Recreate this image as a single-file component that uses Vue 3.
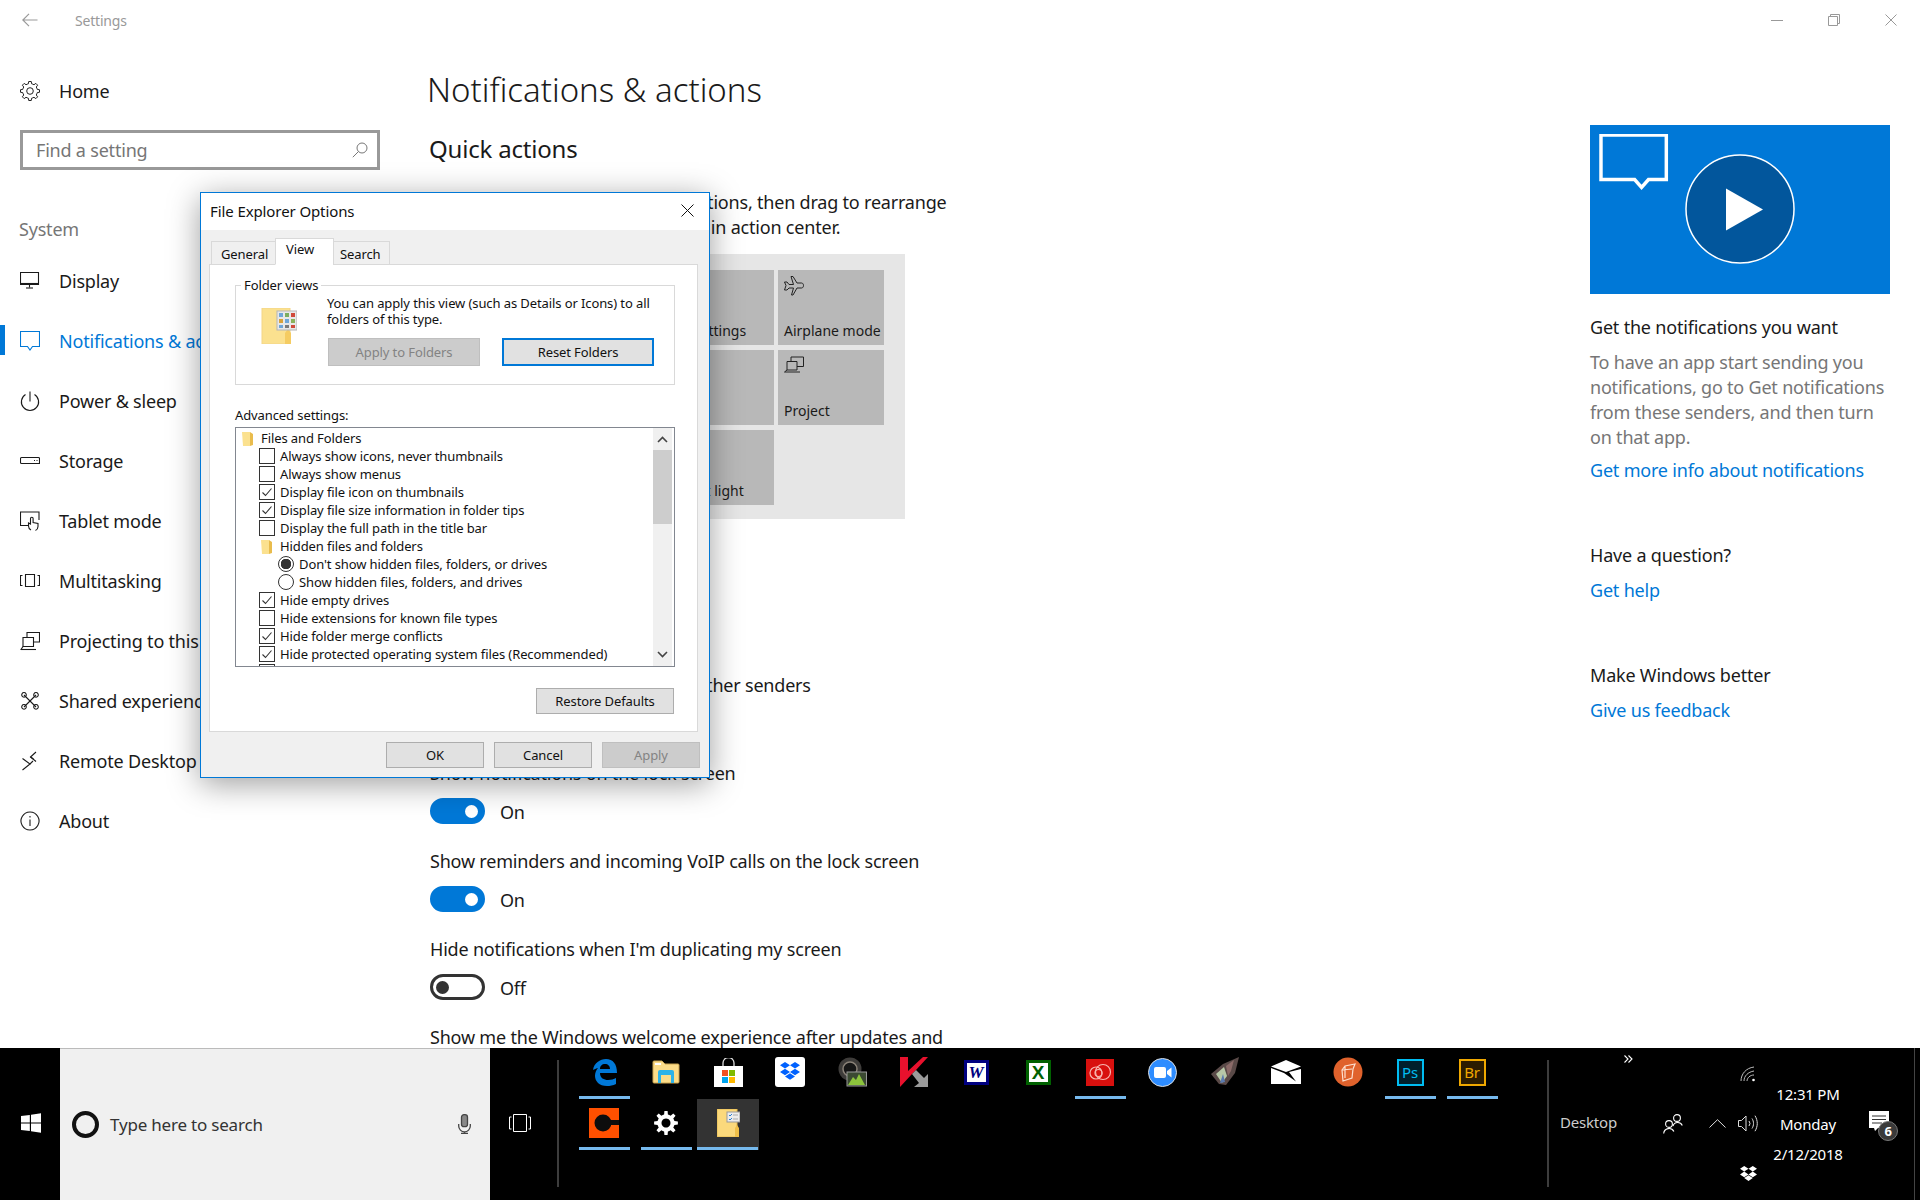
<script setup>
// gear outline used by the Home entry and the taskbar settings icon
const gearPath = (c, outer, inner, teeth) => {
  let d = "";
  const step = (Math.PI * 2) / teeth;
  for (let i = 0; i < teeth; i++) {
    const a = i * step;
    const pts = [
      [inner, a - step * 0.5],
      [inner, a - step * 0.28],
      [outer, a - step * 0.17],
      [outer, a + step * 0.17],
      [inner, a + step * 0.28],
    ];
    pts.forEach(([r, t], j) => {
      const x = (c + r * Math.cos(t)).toFixed(2);
      const y = (c + r * Math.sin(t)).toFixed(2);
      d += (i === 0 && j === 0 ? "M" : "L") + x + " " + y + " ";
    });
  }
  return d + "Z";
};

const homeGear = gearPath(10, 9.6, 7.4, 8);
const taskGear = gearPath(12, 12, 8.6, 8);

const navItems = [
  { label: "Display", paths: ["M.5 1.5h18v12H.5z", "M.5 12.5h18", "M9.5 13.5v3", "M6 17h7"] },
  { label: "Notifications & actions", active: true, paths: ["M.5 .5h19v15h-7l-2.5 3.5-2.5-3.5h-7z"] },
  { label: "Power & sleep", paths: ["M5.5 3.5a8.6 8.6 0 1 0 9 0", "M10 .5v10"] },
  { label: "Storage", paths: ["M1.5 6.5h17a1 1 0 0 1 1 1v5h-18a1 1 0 0 1-1-1v-4a1 1 0 0 1 1-1z", "M14 9.5h1", "M16.5 9.5h1"] },
  { label: "Tablet mode", paths: ["M8 14.5H.5V1h18.5v8", "M11 19a4.5 4.5 0 0 1-2.5-4v-3l2 1V7.5a1.3 1.3 0 0 1 2.6 0v4l4.9 1v3a4.5 4.5 0 0 1-2.5 4"] },
  { label: "Multitasking", paths: ["M5.5 3.5h9v12h-9z", "M2.5 4.5h-2v10h2", "M17.5 4.5h2v10h-2"] },
  { label: "Projecting to this PC", paths: ["M7 6V1.5h12.5V11h-6", "M3 6.5h10.5v9H3z", "M.5 18.5H16", "M1 18.5l2-3"] },
  { label: "Shared experiences", paths: ["M4 4l12 12", "M16 4L4 16", "M4 1.5a2.3 2.3 0 1 0 .01 0z", "M16 1.5a2.3 2.3 0 1 0 .01 0z", "M4 13.5a2.3 2.3 0 1 0 .01 0z", "M16 13.5a2.3 2.3 0 1 0 .01 0z"] },
  { label: "Remote Desktop", paths: ["M2.5 7.5L10 13l-7.5 6", "M16 1l-5.500 5 5.500 4.500", "M10.5 6l3 2", "M10 13l3-3"] },
  { label: "About", paths: ["M10 1a9 9 0 1 0 .01 0z", "M10 8.5V15", "M10 5v1.5"] },
];

const tiles = [
  { label: "Tablet mode" }, { label: "Network" }, { label: "All settings" },
  { label: "Airplane mode", icon: "plane" },
  { label: "Location" }, { label: "Quiet hours" }, { label: "VPN" },
  { label: "Project", icon: "project" },
  { label: "Connect" }, { label: "Battery saver" }, { label: "Night light" },
];

const settings = [
  { label: "Get notifications from apps and other senders", on: true },
  { label: "Show notifications on the lock screen", on: true },
  { label: "Show reminders and incoming VoIP calls on the lock screen", on: true },
  { label: "Hide notifications when I'm duplicating my screen", on: false },
];

const rows = [
  { type: "folder", level: 0, text: "Files and Folders" },
  { type: "check", text: "Always show icons, never thumbnails" },
  { type: "check", text: "Always show menus" },
  { type: "check", checked: true, text: "Display file icon on thumbnails" },
  { type: "check", checked: true, text: "Display file size information in folder tips" },
  { type: "check", text: "Display the full path in the title bar" },
  { type: "folder", level: 1, text: "Hidden files and folders" },
  { type: "radio", checked: true, text: "Don't show hidden files, folders, or drives" },
  { type: "radio", text: "Show hidden files, folders, and drives" },
  { type: "check", checked: true, text: "Hide empty drives" },
  { type: "check", text: "Hide extensions for known file types" },
  { type: "check", checked: true, text: "Hide folder merge conflicts" },
  { type: "check", checked: true, text: "Hide protected operating system files (Recommended)" },
  { type: "check", text: "" },
];
</script>

<template>
  <div class="screen">
    <div class="window">
      <header class="titlebar">
        <svg class="back" width="16" height="14" viewBox="0 0 16 14" fill="none" stroke="#999" stroke-width="1.2">
          <path d="M15.5 7H1M7 .8L.8 7 7 13.2" />
        </svg>
        <span class="app-name">Settings</span>
        <div class="win-controls">
          <svg width="12" height="12" viewBox="0 0 12 12" stroke="#999" fill="none"><path d="M0 6.5h12" /></svg>
          <svg width="12" height="12" viewBox="0 0 12 12" stroke="#999" fill="none"><path d="M.5 2.5h9v9h-9zM2.5 2.5v-2h9v9h-2" /></svg>
          <svg width="12" height="12" viewBox="0 0 12 12" stroke="#999" fill="none"><path d="M.5 .5l11 11M11.5 .5l-11 11" /></svg>
        </div>
      </header>

      <div class="body">
        <aside class="sidebar">
          <div class="nav-row home">
            <svg width="20" height="20" viewBox="0 0 20 20" fill="none" stroke="#222" stroke-width="1">
              <path :d="homeGear" />
              <circle cx="10" cy="10" r="3.3" />
            </svg>
            <span>Home</span>
          </div>
          <div class="find">
            <span>Find a setting</span>
            <svg width="16" height="16" viewBox="0 0 16 16" fill="none" stroke="#777" stroke-width="1">
              <circle cx="10" cy="6" r="5" />
              <path d="M6.5 9.5L.8 15.2" />
            </svg>
          </div>
          <div class="group-label">System</div>
          <nav>
            <div v-for="item in navItems" :key="item.label" class="nav-row" :class="{ active: item.active }">
              <svg width="20" height="20" viewBox="0 0 20 20" fill="none" stroke="currentColor" stroke-width="1.1">
                <path v-for="d in item.paths" :key="d" :d="d" />
              </svg>
              <span>{{ item.label }}</span>
            </div>
          </nav>
        </aside>

        <main class="content">
          <h1>Notifications &amp; actions</h1>
          <h2>Quick actions</h2>
          <p class="intro">Press and hold (or select) quick actions, then drag to rearrange<br />them. These quick actions appear in action center.</p>
          <div class="tile-panel">
            <div v-for="tile in tiles" :key="tile.label" class="tile">
              <svg v-if="tile.icon === 'plane'" width="20" height="20" viewBox="0 0 20 20" fill="none" stroke="#222" stroke-width="1">
                <path d="M7 .5h2l4 6.500h4.500c1.500 0 2 1.500 2 2.500s-.5 2.500-2 2.500H13l-4 7H7.500l2-7H5L3 14H.5L2 9.500.5 6H3l2 2.500h4.500z" />
              </svg>
              <svg v-else-if="tile.icon === 'project'" width="20" height="20" viewBox="0 0 20 20" fill="none" stroke="#222" stroke-width="1">
                <path d="M7 5V1h12.5v9.500H13M3 5.500h10V14H3zM.5 16H16M.5 16L3 14" />
              </svg>
              <span v-else class="tile-blank"></span>
              <span class="tile-label">{{ tile.label }}</span>
            </div>
          </div>
          <h2 class="notif-heading">Notifications</h2>
          <div v-for="s in settings" :key="s.label" class="setting">
            <div class="setting-label">{{ s.label }}</div>
            <div class="toggle-row">
              <span class="toggle" :class="{ on: s.on }"><i></i></span>
              <span class="toggle-text">{{ s.on ? "On" : "Off" }}</span>
            </div>
          </div>
          <div class="setting-label">Show me the Windows welcome experience after updates and</div>
        </main>

        <aside class="help">
          <div class="video">
            <svg class="video-bubble" width="70" height="58" viewBox="0 0 70 58" fill="none" stroke="#fff" stroke-width="3.5">
              <path d="M2 2h66v45H50l-7 8-7-8H2z" transform="translate(0 -1) scale(.99)" />
            </svg>
            <svg class="video-play" width="110" height="110" viewBox="0 0 110 110">
              <circle cx="55" cy="55" r="54" fill="#02569c" stroke="#fff" stroke-width="1.5" />
              <path d="M41 34.500l37 21-37 21z" fill="#fff" />
            </svg>
          </div>
          <h3>Get the notifications you want</h3>
          <p class="help-text">To have an app start sending you<br />notifications, go to Get notifications<br />from these senders, and then turn<br />on that app.</p>
          <a class="help-link">Get more info about notifications</a>
          <h3 class="spaced">Have a question?</h3>
          <a class="help-link near">Get help</a>
          <h3 class="spaced">Make Windows better</h3>
          <a class="help-link near">Give us feedback</a>
        </aside>
      </div>

      <section class="dialog">
        <div class="dlg-title">
          <span>File Explorer Options</span>
          <svg width="13" height="13" viewBox="0 0 13 13" stroke="#111" fill="none"><path d="M.5 .5l12 12M12.5 .5l-12 12" /></svg>
        </div>
        <div class="dlg-main">
          <div class="tabs">
            <span class="tab general">General</span>
            <span class="tab selected">View</span>
            <span class="tab search-tab">Search</span>
          </div>
          <div class="pane">
            <fieldset class="views">
              <legend>Folder views</legend>
              <svg class="views-icon" width="36" height="36" viewBox="0 0 36 36">
                <path d="M1 0h28v36H1z" fill="#fbe18f" stroke="#f3d587" />
                <path d="M24 36V25l3-4 3 4v11z" fill="#f5cc62" />
                <rect x="16" y="3" width="20" height="19" fill="#e8e8e8" stroke="#b5b5b5" />
                <rect x="18" y="5" width="4" height="4" fill="#6fa6d8" />
                <rect x="24" y="5" width="4" height="4" fill="#7cae60" />
                <rect x="30" y="5" width="4" height="4" fill="#d04a3a" />
                <rect x="18" y="11" width="4" height="4" fill="#d9a23a" />
                <rect x="24" y="11" width="4" height="4" fill="#6fa6d8" />
                <rect x="30" y="11" width="4" height="4" fill="#8ab35a" />
                <rect x="18" y="17" width="4" height="3" fill="#6fa6d8" />
                <rect x="24" y="17" width="4" height="3" fill="#7a7a7a" />
                <rect x="30" y="17" width="4" height="3" fill="#d04a3a" />
              </svg>
              <div class="views-side">
                <p>You can apply this view (such as Details or Icons) to all folders of this type.</p>
                <div class="views-btns">
                  <button class="btn disabled">Apply to Folders</button>
                  <button class="btn focused">Reset Folders</button>
                </div>
              </div>
            </fieldset>
            <div class="adv-label">Advanced settings:</div>
            <div class="tree">
              <div class="tree-rows">
                <div v-for="(row, i) in rows" :key="i" class="tree-row" :class="[row.type, row.type === 'folder' ? 'lvl' + row.level : '']">
                  <svg v-if="row.type === 'folder'" width="12" height="15" viewBox="0 0 12 15">
                    <path d="M0 1h8v14H1z" fill="#fbe18f" />
                    <path d="M8 1l3 2v11l-3 1z" fill="#e9bc4d" />
                  </svg>
                  <span v-else-if="row.type === 'check'" class="box">
                    <svg v-if="row.checked" width="14" height="14" viewBox="0 0 14 14" fill="none" stroke="#333" stroke-width="1.1"><path d="M2.5 7.5l3 3 6-7" /></svg>
                  </span>
                  <span v-else class="radio-dot" :class="{ checked: row.checked }"></span>
                  <span>{{ row.text }}</span>
                </div>
              </div>
              <div class="scrollbar">
                <svg width="19" height="22" viewBox="0 0 19 22" fill="none" stroke="#444" stroke-width="1.6"><path d="M5 14l4.500-4.500L14 14" /></svg>
                <div class="thumb"></div>
                <div class="track"></div>
                <svg width="19" height="22" viewBox="0 0 19 22" fill="none" stroke="#444" stroke-width="1.6"><path d="M5 8l4.500 4.500L14 8" /></svg>
              </div>
            </div>
            <div class="restore-row"><button class="btn restore">Restore Defaults</button></div>
          </div>
          <div class="dlg-actions">
            <button class="btn act">OK</button>
            <button class="btn act">Cancel</button>
            <button class="btn act disabled">Apply</button>
          </div>
        </div>
      </section>
    </div>

    <footer class="taskbar">
      <div class="start">
        <svg width="20" height="20" viewBox="0 0 17 20" preserveAspectRatio="none" fill="#fff"><path d="M0 3l7.500-1.100v7.600H0zM8.500 1.700L17 .3v9.200H8.500zM0 10.500h7.500v7.600L0 17zM8.500 10.500H17v9.200l-8.500-1.400z" /></svg>
      </div>
      <div class="search">
        <span class="cortana"></span>
        <span class="search-text">Type here to search</span>
        <svg class="mic" width="13" height="20" viewBox="0 0 13 20" fill="none" stroke="#444" stroke-width="1.3">
          <rect x="3.5" y=".7" width="6" height="12" rx="2.5" fill="#888" />
          <path d="M.7 10v2a5.800 5.800 0 0 0 11.600 0v-2M6.500 18v1.500M3 19.500h7" />
        </svg>
      </div>
      <div class="taskview">
        <svg width="22" height="18" viewBox="0 0 22 18" fill="none" stroke="#fff" stroke-width="1"><path d="M4.500 .5h13v17h-13zM2.500 3h-2v12h2M19.500 3h2v12h-2" /></svg>
      </div>
      <div class="sep"></div>

      <div class="apps">
        <div class="app run">
          <svg width="25" height="27" viewBox="0 0 25 27">
            <path fill-rule="evenodd" fill="#0078d7" d="M1 11C2 4 8 0 14 0c7 0 11 5 11 14H8c0 5 4 7 8 7 3 0 6-1 8-2v6c-3 1.500-6 2-9 2-8 0-12-5-12-10 0-3 1-6 3-8-3 1-5 2-7 2zM8 10h10c0-3-2-5-5-5s-5 2-5 5z" />
          </svg>
        </div>
        <div class="app">
          <svg width="28" height="24" viewBox="0 0 28 24">
            <path d="M1 2a1 1 0 0 1 1-1h8l3 3h13a1 1 0 0 1 1 1v17a1 1 0 0 1-1 1H2a1 1 0 0 1-1-1z" fill="#fcdc88" stroke="#c9a450" />
            <path d="M3 3h6v2H3z" fill="#fff" />
            <path d="M6 18v-6a2 2 0 0 1 2-2h12a2 2 0 0 1 2 2v6h-3v-3H9v3z M6 18h3v5H6z M19 18h3v5h-3z" fill="#2db3e8" />
          </svg>
        </div>
        <div class="app">
          <svg width="29" height="29" viewBox="0 0 29 29">
            <path d="M9 8V5a5.500 5.500 0 0 1 11 0v3" fill="none" stroke="#ddd" stroke-width="1.3" />
            <path d="M0 8h29v21H0z" fill="#fff" />
            <path d="M8 12h6v6H8z" fill="#f25022" /><path d="M15 12h6v6h-6z" fill="#7fba00" />
            <path d="M8 19h6v6H8z" fill="#00a4ef" /><path d="M15 19h6v6h-6z" fill="#ffb900" />
          </svg>
        </div>
        <div class="app">
          <svg width="30" height="30" viewBox="0 0 30 30">
            <rect width="30" height="30" rx="3" fill="#fff" />
            <path fill="#0061fe" d="M10 5l5 3.300-5 3.300-5-3.300zM20 5l5 3.300-5 3.300-5-3.300zM5 15l5-3.300 5 3.300-5 3.300zM15 15l5-3.300 5 3.300-5 3.300zM10 19.500l5-3.300 5 3.300-5 3.300z" />
          </svg>
        </div>
        <div class="app">
          <svg width="30" height="30" viewBox="0 0 30 30">
            <circle cx="13" cy="12" r="11.5" fill="#3e3c3a" />
            <circle cx="13" cy="12" r="7" fill="#161616" stroke="#8a8278" stroke-width="1.5" />
            <rect x="10" y="15" width="19.5" height="14" fill="#3b4a32" stroke="#999" />
            <path d="M11 28l5-8 3 3 3-6 6 11z" fill="#8cc43c" />
          </svg>
        </div>
        <div class="app">
          <svg width="30" height="30" viewBox="0 0 30 30">
            <path d="M1 0h8v14L24 0h5L17 13l-4 4-12 13z" fill="#e8112d" />
            <path d="M13 17l4-4 8 8 4-4v13H15l5-4z" fill="#9a9a9a" />
          </svg>
        </div>
        <div class="app"><span class="doc word">W</span></div>
        <div class="app"><span class="doc excel">X</span></div>
        <div class="app run">
          <svg width="28" height="27" viewBox="0 0 28 27">
            <rect width="28" height="27" fill="#d8100e" />
            <g fill="none" stroke="#f8b6b0" stroke-width="1.2">
              <circle cx="10" cy="14" r="6" /><circle cx="17" cy="13" r="7.5" /><circle cx="12.5" cy="14" r="3.5" />
            </g>
          </svg>
        </div>
        <div class="app">
          <svg width="29" height="29" viewBox="0 0 29 29">
            <circle cx="14.5" cy="14.5" r="14" fill="#2d8cff" stroke="#ddd" stroke-width="1" />
            <rect x="6" y="9" width="12" height="11" rx="2" fill="#fff" />
            <path d="M19 13l4.500-3.500v10L19 16z" fill="#fff" />
          </svg>
        </div>
        <div class="app">
          <svg width="30" height="30" viewBox="0 0 30 30">
            <path d="M2 17L14 7l16-7-4 16-9 12-7-1z" fill="#5a4a48" />
            <path d="M7 17l8-7 3 9-5 7z" fill="#b8c8a8" />
            <path d="M17 9l8-6-3 11-3 5z" fill="#8a6a68" />
            <path d="M11 26l3-9 2 8z" fill="#5b7bb0" />
          </svg>
        </div>
        <div class="app">
          <svg width="30" height="24" viewBox="0 0 30 24">
            <path d="M0 6.500L15 0l15 6.500-15 5.500z" fill="#fff" />
            <path d="M0 8l13 5 12 8.500L18 12l12-3v15H0z" fill="#fff" />
          </svg>
        </div>
        <div class="app">
          <svg width="30" height="30" viewBox="0 0 30 30">
            <circle cx="15" cy="15" r="14.5" fill="#e0622c" />
            <path d="M9 13l3-4 10-2-2 5-1 9-9 3zM9 13l10-1M12 9v12M20 12l-1 9" fill="none" stroke="#fde0d0" stroke-width="1.2" />
          </svg>
        </div>
        <div class="app run"><span class="adobe ps">Ps</span></div>
        <div class="app run"><span class="adobe br">Br</span></div>

        <div class="app run">
          <svg width="30" height="30" viewBox="0 0 30 30">
            <rect width="30" height="30" fill="#ff5000" />
            <circle cx="14" cy="15" r="8.5" fill="#0d0d0d" />
            <path d="M14 12h16v5H14z" fill="#0d0d0d" />
            <path d="M22 12h8v-1h-8zM22 17h8v1h-8z" fill="#ff5000" />
          </svg>
        </div>
        <div class="app run">
          <svg width="24" height="24" viewBox="0 0 24 24">
            <path fill-rule="evenodd" fill="#fff" :d="taskGear + ' M12 7.5a4.500 4.500 0 1 0 .01 0z'" />
          </svg>
        </div>
        <div class="app run current">
          <svg width="23" height="28" viewBox="0 0 23 28">
            <path d="M0 0h20v28H0z" fill="#fbd97c" stroke="#e5b94c" />
            <path d="M18 28v-9l2-3 2 3v9z" fill="#f0c04a" />
            <rect x="10" y="3" width="13" height="10" fill="#ececec" stroke="#999" />
            <path d="M12 6l1 1 2-2M12 10l1 1 2-2" stroke="#2c7fd0" fill="none" />
            <path d="M16 6h5M16 10h5" stroke="#aaa" />
          </svg>
        </div>
      </div>

      <div class="sep"></div>
      <div class="tray">
        <span class="tray-desktop">Desktop</span>
        <svg class="tray-more" width="9" height="8" viewBox="0 0 9 8" fill="none" stroke="#fff" stroke-width="1.1"><path d="M.5 .5L4 4 .5 7.500M4.500 .5L8 4 4.500 7.500" /></svg>
        <div class="tray-people">
          <svg width="20" height="20" viewBox="0 0 20 20" fill="none" stroke="#fff" stroke-width="1.1">
            <circle cx="6" cy="10" r="3.4" /><circle cx="14" cy="4" r="3.4" />
            <path d="M.7 19.500a5.400 5.400 0 0 1 10.200-2M10 12a5 5 0 0 1 9.300-.5" />
          </svg>
        </div>
        <div class="tray-up">
          <svg width="17" height="9" viewBox="0 0 17 9" fill="none" stroke="#ddd" stroke-width="1"><path d="M.5 8.500L8.500 .7l8 7.800" /></svg>
        </div>
        <div class="tray-icons">
          <svg class="ti-wifi" width="16" height="16" viewBox="0 0 16 16" fill="none" stroke="#bbb" stroke-width="1">
            <path d="M1 15C1 8 6 2 14 1M4 15c0-5 4-9 10-10M7 15c0-3 3-6 7-6" />
            <circle cx="13.5" cy="14" r="1.3" fill="#fff" stroke="none" />
          </svg>
          <svg class="ti-sound" width="21" height="17" viewBox="0 0 21 17" fill="none" stroke="#ddd" stroke-width="1">
            <path d="M.5 5.500h3L8 1v15l-4.500-4.500h-3zM11 6a4 4 0 0 1 0 5M14 3.500c2 3 2 7 0 10M17 .7c3 5 3 10.500 0 15.500" />
          </svg>
          <svg class="ti-box" width="17" height="15" viewBox="0 0 17 15" fill="#fff">
            <path d="M4.200 0l4.300 2.800-4.300 2.800L0 2.800zM12.800 0L17 2.800l-4.200 2.800-4.300-2.800zM0 8.400l4.200-2.800 4.300 2.800-4.300 2.800zM12.800 5.600L17 8.400l-4.200 2.800-4.300-2.800zM4.200 12l4.300-2.800 4.300 2.800-4.300 3z" />
          </svg>
        </div>
        <div class="clock">
          <span>12:31 PM</span>
          <span>Monday</span>
          <span>2/12/2018</span>
        </div>
        <div class="action-center">
          <svg width="20" height="20" viewBox="0 0 20 20">
            <path fill="#fff" d="M0 0h20v17H9l-3 3-1-3H0z" />
            <path stroke="#333" d="M3 5h14M3 8.500h14M3 12h10" fill="none" />
          </svg>
          <span class="badge">6</span>
        </div>
        <div class="tray-edge"></div>
      </div>
    </footer>
  </div>
</template>

<style>
html, body {
  margin: 0;
  background: #fff;
}
</style>

<style scoped>
.screen {
  width: 1920px;
  height: 1200px;
  display: flex;
  flex-direction: column;
  overflow: hidden;
  font-family: "Noto Sans", "Open Sans", sans-serif;
  letter-spacing: -0.2px;
  color: #1a1a1a;
}

.window {
  position: relative;
  height: 1048px;
  background: #fff;
  overflow: hidden;
  flex: none;
}

.titlebar {
  height: 40px;
  display: flex;
  align-items: center;
  padding-left: 22px;
}
.app-name {
  margin-left: 37px;
  font-size: 14px;
  color: #999;
}
.win-controls {
  margin-left: auto;
  display: flex;
  gap: 45px;
  padding-right: 23px;
}

.body {
  display: flex;
  height: 1008px;
}

.sidebar {
  width: 429px;
  flex: none;
  padding-top: 21px;
  box-sizing: border-box;
}
.nav-row {
  position: relative;
  height: 60px;
  display: flex;
  align-items: center;
  gap: 19px;
  padding-left: 20px;
  font-size: 18px;
  white-space: nowrap;
  color: #1a1a1a;
}
.nav-row.active {
  color: #0078d7;
}
.nav-row.active::before {
  content: "";
  position: absolute;
  left: 0;
  top: 14px;
  width: 5px;
  height: 30px;
  background: #0078d7;
}
.find {
  margin: 9px 0 0 20px;
  width: 360px;
  height: 40px;
  box-sizing: border-box;
  border: 3px solid #999;
  display: flex;
  align-items: center;
  justify-content: space-between;
  padding: 0 9px 0 13px;
  font-size: 18px;
  color: #767676;
}
.group-label {
  margin: 44px 0 7px 19px;
  line-height: 30px;
  font-size: 18px;
  color: #767676;
}

.content {
  flex: 1;
  padding-top: 26px;
  min-width: 0;
}
h1 {
  margin: 0 0 0 -2px;
  font-size: 33px;
  line-height: 48px;
  font-weight: 300;
  letter-spacing: 0;
}
h2 {
  margin: 17px 0 0;
  font-size: 24px;
  line-height: 36px;
  font-weight: 400;
}
.intro {
  margin: 23px 0 0;
  font-size: 18px;
  line-height: 25px;
}
.tile-panel {
  margin-top: 14px;
  width: 476px;
  height: 265px;
  box-sizing: border-box;
  background: #e6e6e6;
  padding: 16px 0 0 19px;
  display: grid;
  grid-template-columns: repeat(4, 106px);
  grid-auto-rows: 75px;
  gap: 5px 4px;
}
.tile {
  background: #b8b8b8;
  display: flex;
  flex-direction: column;
  justify-content: space-between;
  align-items: flex-start;
  padding: 6px 6px 4px;
  box-sizing: border-box;
  font-size: 14px;
  letter-spacing: 0;
  white-space: nowrap;
}
.tile-label {
  line-height: 20px;
}
.notif-heading {
  margin-top: 63px;
  margin-bottom: 55px;
}
.setting {
  height: 88px;
}
.setting-label {
  margin-left: 1px;
  font-size: 18px;
  line-height: 25px;
  white-space: nowrap;
}
.toggle-row {
  margin: 11px 0 0 1px;
  display: flex;
  align-items: center;
  gap: 15px;
  font-size: 18px;
  line-height: 26px;
}
.toggle-text {
  padding-top: 2px;
}
.toggle {
  width: 55px;
  height: 26px;
  box-sizing: border-box;
  border-radius: 13px;
  border: 3px solid #333;
  display: flex;
  align-items: center;
  padding: 0 3px;
}
.toggle i {
  width: 13px;
  height: 13px;
  border-radius: 50%;
  background: #333;
}
.toggle.on {
  background: #0078d7;
  border-color: #0078d7;
  justify-content: flex-end;
  padding: 0 4px;
}
.toggle.on i {
  background: #fff;
}

.help {
  width: 330px;
  flex: none;
  padding-top: 85px;
  box-sizing: border-box;
  font-size: 18px;
  line-height: 25px;
}
.video {
  width: 300px;
  height: 169px;
  background: #0078d7;
  display: flex;
  align-items: center;
  justify-content: center;
  position: relative;
}
.video-bubble {
  position: absolute;
  left: 9px;
  top: 9px;
}
.video-play {
  margin-bottom: 2px;
}
h3 {
  margin: 21px 0 0;
  font-size: 18px;
  line-height: 25px;
  font-weight: 400;
}
h3.spaced {
  margin-top: 60px;
}
.help-text {
  margin: 10px 0 0;
  color: #767676;
  white-space: nowrap;
}
.help-link {
  display: block;
  margin-top: 8px;
  color: #0078d7;
}
.help-link.near {
  margin-top: 10px;
}

/* dialog floats over the settings window */
.dialog {
  position: absolute;
  left: 200px;
  top: 192px;
  width: 510px;
  height: 586px;
  box-sizing: border-box;
  border: 1.5px solid #0078d7;
  background: #f0f0f0;
  box-shadow: 0 6px 30px rgba(0, 0, 0, 0.38);
  display: flex;
  flex-direction: column;
  font-size: 13px;
  letter-spacing: -0.1px;
  color: #111;
}
.dlg-title {
  height: 37px;
  flex: none;
  background: #fff;
  display: flex;
  align-items: center;
  justify-content: space-between;
  padding: 0 15px 2px 9px;
  box-sizing: border-box;
  font-size: 15px;
}
.dlg-main {
  flex: 1;
  padding: 9px 9px 0 8px;
  display: flex;
  flex-direction: column;
}
.tabs {
  display: flex;
  height: 26px;
  align-items: flex-end;
  padding-left: 3px;
  position: relative;
  z-index: 1;
  margin-bottom: -1px;
}
.tab {
  height: 24px;
  box-sizing: border-box;
  border: 1px solid #d9d9d9;
  margin-left: -1px;
  padding-top: 2px;
  background: #f0f0f0;
  line-height: 21px;
}
.tab.general {
  width: 65px;
  padding-left: 9px;
}
.tab.selected {
  width: 59px;
  height: 27px;
  background: #fff;
  border-bottom-color: #fff;
  padding: 0 0 0 10px;
}
.tab.search-tab {
  width: 57px;
  padding-left: 6px;
}
.pane {
  width: 489px;
  height: 468px;
  box-sizing: border-box;
  background: #fff;
  border: 1px solid #d9d9d9;
  padding: 12px 22px 0 25px;
}
.views {
  margin: 0;
  padding: 0 0 0 25px;
  height: 108px;
  box-sizing: border-box;
  border: 1px solid #d9d9d9;
  display: flex;
  gap: 30px;
}
.views legend {
  padding: 0 3px;
  margin-left: -20px;
  line-height: 16px;
}
.views-icon {
  margin-top: 15px;
  flex: none;
}
.views-side p {
  margin: 0;
  line-height: 16px;
  width: 345px;
  padding-top: 2px;
}
.views-btns {
  display: flex;
  gap: 22px;
  margin-top: 11px;
  margin-left: 1px;
}
.btn {
  font: inherit;
  letter-spacing: inherit;
  color: #111;
  background: #e1e1e1;
  border: 1px solid #adadad;
  padding: 0;
}
.views-btns .btn {
  width: 152px;
  height: 28px;
}
.btn.disabled {
  background: #ccc;
  border-color: #bfbfbf;
  color: #838383;
}
.btn.focused {
  border: 2px solid #0078d7;
}
.adv-label {
  margin-top: 21px;
  line-height: 18px;
}
.tree {
  margin-top: 3px;
  height: 240px;
  box-sizing: border-box;
  border: 1px solid #828790;
  display: flex;
  background: #fff;
}
.tree-rows {
  flex: 1;
  overflow: hidden;
  padding-top: 1px;
}
.tree-row {
  height: 18px;
  display: flex;
  align-items: center;
  white-space: nowrap;
  gap: 5px;
}
.tree-row.folder.lvl0 {
  padding-left: 6px;
  gap: 7px;
}
.tree-row.folder.lvl1 {
  padding-left: 25px;
  gap: 7px;
}
.tree-row.check {
  padding-left: 23px;
}
.tree-row.radio {
  padding-left: 42px;
}
.box {
  width: 16px;
  height: 16px;
  box-sizing: border-box;
  border: 1px solid #333;
  flex: none;
  display: flex;
  align-items: center;
  justify-content: center;
}
.radio-dot {
  width: 16px;
  height: 16px;
  box-sizing: border-box;
  border: 1px solid #333;
  border-radius: 50%;
  flex: none;
  display: flex;
}
.radio-dot.checked {
  background: radial-gradient(circle, #333 0 5px, #fff 5.5px);
}
.scrollbar {
  width: 19px;
  margin-right: 2px;
  flex: none;
  background: #f0f0f0;
  display: flex;
  flex-direction: column;
}
.thumb {
  height: 74px;
  background: #cdcdcd;
  flex: none;
}
.track {
  flex: 1;
}
.restore-row {
  display: flex;
  justify-content: flex-end;
  margin-top: 21px;
}
.btn.restore {
  width: 138px;
  height: 26px;
  margin-right: 1px;
}
.dlg-actions {
  display: flex;
  justify-content: flex-end;
  gap: 10px;
  margin-top: 10px;
}
.btn.act {
  width: 98px;
  height: 26px;
}

.taskbar {
  flex: none;
  height: 152px;
  background: #000;
  display: flex;
  color: #fff;
}
.start {
  width: 60px;
  flex: none;
  display: flex;
  align-items: center;
  justify-content: center;
  padding: 0 0 2px 1px;
  box-sizing: border-box;
}
.search {
  width: 430px;
  flex: none;
  box-sizing: border-box;
  background: #f0f0f0;
  border-top: 1px solid #bbb;
  display: flex;
  align-items: center;
  padding: 0 19px 1px 12px;
  color: #333;
  font-size: 17px;
}
.cortana {
  width: 27px;
  height: 27px;
  box-sizing: border-box;
  border: 4px solid #111;
  border-radius: 50%;
  flex: none;
}
.search-text {
  margin-left: 11px;
}
.mic {
  margin-left: auto;
}
.taskview {
  width: 67px;
  flex: none;
  display: flex;
  align-items: center;
  justify-content: center;
  padding: 0 7px 2px 0;
  box-sizing: border-box;
}
.sep {
  width: 2px;
  flex: none;
  background: #3d3d3d;
  margin: 12px 0 13px;
}
.apps {
  width: 988px;
  flex: none;
  box-sizing: border-box;
  padding-left: 14px;
  display: grid;
  grid-template-columns: repeat(15, 62px);
  grid-auto-rows: 51px;
  align-content: start;
}
.app {
  position: relative;
  display: flex;
  align-items: center;
  justify-content: center;
  padding-bottom: 3px;
  box-sizing: border-box;
}
.app.run::after {
  content: "";
  position: absolute;
  left: 6px;
  right: 5px;
  bottom: 0;
  height: 3px;
  background: #76b9ed;
}
.app.current {
  background: #333;
}
.app.current::after {
  left: 0;
  right: 1px;
}
.doc {
  width: 25px;
  height: 25px;
  box-sizing: border-box;
  background: #fff;
  font: italic 700 17px/19px "Liberation Serif", serif;
  text-align: center;
}
.doc.word {
  border: 3px solid #000080;
  color: #000080;
}
.doc.excel {
  border: 3px solid #006100;
  color: #006100;
  font: 700 19px/19px "Liberation Sans", sans-serif;
}
.adobe {
  width: 27px;
  height: 27px;
  box-sizing: border-box;
  font-size: 15px;
  line-height: 22px;
  text-align: center;
}
.adobe.ps {
  background: #00202c;
  border: 2px solid #00bdf2;
  color: #00bdf2;
}
.adobe.br {
  background: #2c1c00;
  border: 2px solid #f0a800;
  color: #f0a800;
}
.tray {
  flex: 1;
  display: flex;
  align-items: center;
}
.tray-desktop {
  width: 64px;
  padding-left: 11px;
  font-size: 15px;
  color: #ccc;
  margin-bottom: 4px;
}
.tray-more {
  align-self: flex-start;
  margin: 7px 3px 0 0;
}
.tray-people {
  width: 73px;
  display: flex;
  justify-content: center;
}
.tray-up {
  width: 21px;
  flex: none;
  display: flex;
  margin-bottom: 2px;
}
.tray-icons {
  width: 36px;
  align-self: stretch;
  display: flex;
  flex-direction: column;
  align-items: center;
  padding-top: 18px;
  box-sizing: border-box;
}
.ti-sound {
  margin-top: 33px;
}
.ti-box {
  margin-top: 34px;
}
.clock {
  width: 84px;
  display: flex;
  flex-direction: column;
  align-items: center;
  font-size: 15px;
  line-height: 30px;
  white-space: nowrap;
}
.action-center {
  position: relative;
  width: 64px;
  flex: none;
  box-sizing: border-box;
  padding-left: 19px;
  margin-bottom: 6px;
  display: flex;
}
.badge {
  position: absolute;
  left: 28px;
  top: 10px;
  width: 20px;
  height: 20px;
  box-sizing: border-box;
  border-radius: 50%;
  background: #3a3a3a;
  border: 1px solid #777;
  font-size: 13px;
  font-weight: 700;
  line-height: 18px;
  text-align: center;
}
.tray-edge {
  width: 1px;
  align-self: stretch;
  background: #444;
}
</style>
